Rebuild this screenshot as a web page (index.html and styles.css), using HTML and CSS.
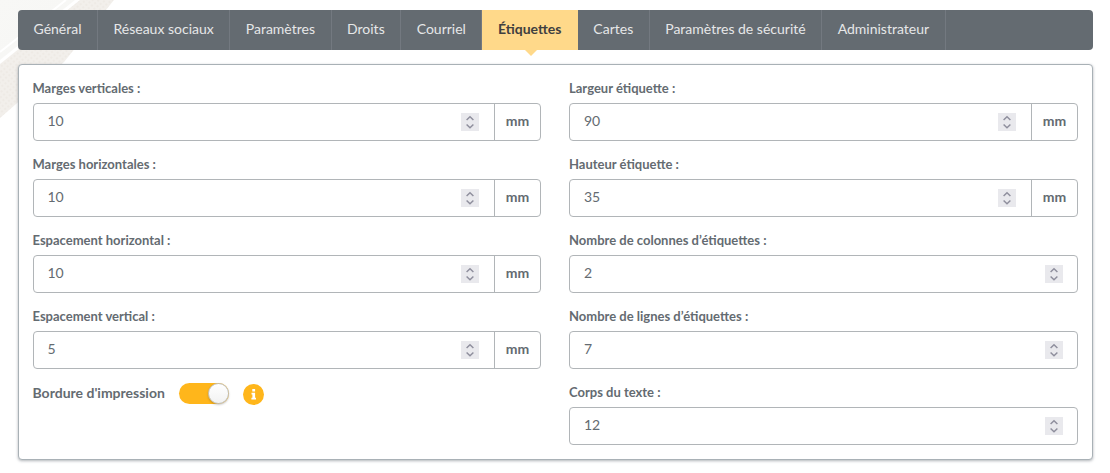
FILE: index.html
```html
<!DOCTYPE html>
<html lang="fr">
<head>
<meta charset="utf-8">
<title>Étiquettes</title>
<link rel="stylesheet" href="styles.css">
</head>
<body>
<svg class="backdrop" width="130" height="130" viewBox="0 0 130 130" aria-hidden="true">
  <defs>
    <linearGradient id="sheet" x1="0" y1="0" x2="1" y2="1"><stop offset="0" stop-color="#f8f8f6"/><stop offset="1" stop-color="#f6f6f4"/></linearGradient>
    <pattern id="weave" width="4" height="4" patternUnits="userSpaceOnUse" patternTransform="rotate(-38)"><rect width="4" height="4" fill="#f2efeb"/><rect width="2" height="2" fill="#eeeae5"/></pattern>
  </defs>
  <path d="M0 0H75L0 60Z" fill="url(#sheet)"/>
  <path d="M0 52L66 0" stroke="#fff" stroke-width="2"/>
  <path d="M80 0H114L64 62L0 118V64Z" fill="url(#weave)"/>
</svg>
<main class="page">
  <nav class="menu">
    <a class="item">Général</a><a class="item">Réseaux sociaux</a><a class="item">Paramètres</a><a class="item">Droits</a><a class="item">Courriel</a><a class="item active">Étiquettes</a><a class="item">Cartes</a><a class="item">Paramètres de sécurité</a><a class="item">Administrateur</a>
  </nav>
  <section class="segment">
    <div class="column">
      <div class="field"><label class="label">Marges verticales :</label><div class="input"><span class="value">10</span><svg class="spin" viewBox="0 0 18 18"><path d="M5.6 7L9 3.8L12.400 7M5.600 11.500L9 14.700L12.400 11.500"/></svg><span class="unit">mm</span></div></div>
      <div class="field"><label class="label">Marges horizontales :</label><div class="input"><span class="value">10</span><svg class="spin" viewBox="0 0 18 18"><path d="M5.6 7L9 3.8L12.400 7M5.600 11.500L9 14.700L12.400 11.500"/></svg><span class="unit">mm</span></div></div>
      <div class="field"><label class="label">Espacement horizontal :</label><div class="input"><span class="value">10</span><svg class="spin" viewBox="0 0 18 18"><path d="M5.6 7L9 3.8L12.400 7M5.600 11.500L9 14.700L12.400 11.500"/></svg><span class="unit">mm</span></div></div>
      <div class="field"><label class="label">Espacement vertical :</label><div class="input"><span class="value">5</span><svg class="spin" viewBox="0 0 18 18"><path d="M5.6 7L9 3.8L12.400 7M5.600 11.500L9 14.700L12.400 11.500"/></svg><span class="unit">mm</span></div></div>
      <div class="option"><span class="option-label">Bordure d'impression</span><span class="toggle"><span class="knob"></span></span><svg class="info" width="21" height="21" viewBox="0 0 21 21"><circle cx="10.500" cy="10.500" r="10.500" fill="#ffb61b"/><path fill="#fff" d="M9.300 5h2.800v2.600H9.300zM8.500 8.800h3.600v4.900h.900v1.700H8.400v-1.700h1v-3.200h-.9z"/></svg></div>
    </div>
    <div class="column">
      <div class="field"><label class="label">Largeur étiquette :</label><div class="input"><span class="value">90</span><svg class="spin" viewBox="0 0 18 18"><path d="M5.6 7L9 3.8L12.400 7M5.600 11.500L9 14.700L12.400 11.500"/></svg><span class="unit">mm</span></div></div>
      <div class="field"><label class="label">Hauteur étiquette :</label><div class="input"><span class="value">35</span><svg class="spin" viewBox="0 0 18 18"><path d="M5.6 7L9 3.8L12.400 7M5.600 11.500L9 14.700L12.400 11.500"/></svg><span class="unit">mm</span></div></div>
      <div class="field"><label class="label">Nombre de colonnes d’étiquettes :</label><div class="input"><span class="value">2</span><svg class="spin" viewBox="0 0 18 18"><path d="M5.6 7L9 3.8L12.400 7M5.600 11.500L9 14.700L12.400 11.500"/></svg></div></div>
      <div class="field"><label class="label">Nombre de lignes d’étiquettes :</label><div class="input"><span class="value">7</span><svg class="spin" viewBox="0 0 18 18"><path d="M5.6 7L9 3.8L12.400 7M5.600 11.500L9 14.700L12.400 11.500"/></svg></div></div>
      <div class="field"><label class="label">Corps du texte :</label><div class="input"><span class="value">12</span><svg class="spin" viewBox="0 0 18 18"><path d="M5.6 7L9 3.8L12.400 7M5.600 11.500L9 14.700L12.400 11.500"/></svg></div></div>
    </div>
  </section>
</main>
</body>
</html>
```
FILE: styles.css
```css
* { box-sizing: border-box; }
body {
  margin: 0;
  height: 473px;
  overflow: hidden;
  background: #fff;
  color: #646b71;
  font: 14px/20px Lato, sans-serif;
}
.backdrop { position: absolute; left: 0; top: 0; z-index: -1; }
.page { padding: 10px 17px 0 18px; }
.menu {
  display: flex;
  height: 40px;
  background: #646b71;
  border-radius: 4px;
}
.item {
  position: relative;
  display: flex;
  align-items: center;
  padding: 0 15.5px 2px;
  color: #e6e7e8;
  border-right: 1px solid #737980;
}
.item.active {
  background: #ffd98a;
  color: #404040;
  font-weight: 700;
  border-right-color: #ffd98a;
}
.item.active::after {
  content: "";
  position: absolute;
  left: 50%;
  top: 100%;
  margin-left: -5px;
  border: 6px solid transparent;
  border-top-color: #ffd98a;
  border-bottom: 0;
}
.segment {
  display: grid;
  grid-template-columns: 508px 1fr;
  column-gap: 28px;
  margin-top: 14px;
  height: 396px;
  padding: 14px;
  background: #fff;
  border: 1px solid #a9b1b6;
  border-radius: 4px;
  box-shadow: 0 1px 3px rgba(60, 70, 80, .4);
}
.field { height: 76px; }
.label {
  display: block;
  height: 24px;
  margin-left: -.5px;
  line-height: 18px;
  font-size: 13px;
  font-weight: 700;
}
.input {
  display: flex;
  align-items: center;
  height: 38px;
  border: 1px solid #b1b5b8;
  border-radius: 4px;
  background: #fff;
}
.value { flex: 1; padding: 0 13.5px 2px; }
.column:last-child .label { margin-left: 0; }
.column:last-child .value { padding-left: 14px; }
.spin {
  width: 18px;
  height: 18px;
  margin-right: 14px;
  background: #e9e9ed;
  fill: none;
  stroke: #8f8f9d;
  stroke-width: 1.5;
}
.spin:not(:last-child) { margin-right: 15px; }
.unit {
  width: 46px;
  height: 36px;
  border-left: 1px solid #b1b5b8;
  line-height: 34px;
  text-align: center;
  font-weight: 700;
}
.option { display: flex; align-items: center; height: 24px; margin-top: -2px; }
.option-label { margin-left: -.5px; font-weight: 700; }
.toggle {
  position: relative;
  width: 50px;
  height: 21px;
  margin-left: 14.5px;
  border-radius: 11px;
  background: #ffb61b;
}
.knob {
  position: absolute;
  right: 0;
  top: 0;
  width: 21px;
  height: 21px;
  border: 1px solid #bfc3c7;
  border-radius: 50%;
  background: linear-gradient(#fff, #f2f2f2);
  box-shadow: 0 1px 2px rgba(34, 36, 38, .25);
}
.info { margin: 2px 0 0 14px; }
```
